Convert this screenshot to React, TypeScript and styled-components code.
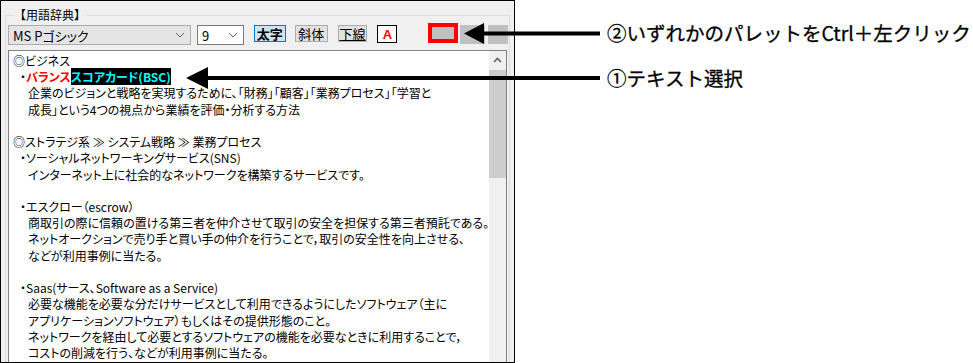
import React from "react";
import styled, { createGlobalStyle } from "styled-components";

const Global = createGlobalStyle`
  html, body { margin: 0; padding: 0; background: #ffffff; }
  body {
    width: 973px;
    height: 363px;
    overflow: hidden;
    font-family: "Noto Sans CJK JP", "Noto Sans", sans-serif;
  }
`;

const Page = styled.div`
  position: relative;
  display: flex;
  width: 973px;
  height: 363px;
`;

const Window = styled.div`
  box-sizing: border-box;
  flex: none;
  width: 515px;
  height: 363px;
  border: 1px solid #000;
  background: #f0f0f0;
  overflow: hidden;
  padding: 14px 4px 0 4px;
`;

const GroupBox = styled.div`
  position: relative;
  border: 1px solid #dcdcdc;
  border-bottom: none;
  padding: 9px 1px 0 1px;
  height: 400px;
`;

const GroupTitle = styled.div`
  position: absolute;
  top: -9px;
  left: 7px;
  padding: 0 1px;
  background: #f0f0f0;
  font-size: 12px;
  line-height: 16px;
  color: #000;
`;

const Toolbar = styled.div`
  display: flex;
  align-items: flex-start;
  height: 20px;
  margin-left: 1px;
  font-feature-settings: "palt";
`;

const Select = styled.div<{ $w: number; $light?: boolean; $ml?: number }>`
  box-sizing: border-box;
  width: ${(p) => p.$w}px;
  height: 20px;
  margin-left: ${(p) => p.$ml ?? 0}px;
  border: 1px solid ${(p) => (p.$light ? "#7a7a7a" : "#adadad")};
  background: ${(p) => (p.$light ? "#ffffff" : "#e5e5e5")};
  display: flex;
  align-items: center;
  justify-content: space-between;
  padding: 0 5px 0 4px;
  font-size: 13px;
  color: #000;
`;

const ToolButton = styled.div<{ $w: number; $ml: number; $active?: boolean; $underline?: boolean }>`
  box-sizing: border-box;
  width: ${(p) => p.$w}px;
  height: 17px;
  margin-left: ${(p) => p.$ml}px;
  border: 1px solid ${(p) => (p.$active ? "#0078d7" : "#adadad")};
  background: ${(p) => (p.$active ? "#cce4f7" : "#e1e1e1")};
  display: flex;
  align-items: center;
  justify-content: center;
  font-size: 13px;
  line-height: 15px;
  font-weight: ${(p) => (p.$active ? 700 : 400)};
  text-decoration: ${(p) => (p.$underline ? "underline" : "none")};
  text-underline-offset: 1px;
  color: #000;
`;

const ColorButton = styled.div`
  box-sizing: border-box;
  width: 20px;
  height: 18px;
  margin-left: 10px;
  border: 1px solid #000;
  background: #fff;
  display: flex;
  align-items: center;
  justify-content: center;
  font-family: "Liberation Sans", Arial, sans-serif;
  font-weight: 700;
  font-size: 13px;
  color: #ff0000;
`;

const Swatch = styled.div<{ $w: number; $ml: number; $selected?: boolean }>`
  box-sizing: border-box;
  width: ${(p) => p.$w}px;
  height: ${(p) => (p.$selected ? 20 : 19)}px;
  margin-left: ${(p) => p.$ml}px;
  margin-top: ${(p) => (p.$selected ? -2 : 0)}px;
  background: #c0c0c0;
  border: ${(p) => (p.$selected ? "4px solid #ff0000" : "none")};
`;

const TextBox = styled.div`
  display: flex;
  margin: 5px 1px 0 1px;
  height: 330px;
  border: 1px solid #828282;
  background: #ffffff;
`;

const TextContent = styled.div`
  flex: 1;
  padding: 2px 0 0 4px;
  font-size: 12px;
  line-height: 16.22px;
  color: #000;
  font-feature-settings: "palt";
  white-space: nowrap;
  overflow: hidden;
`;

const Line = styled.div<{ $indent: number }>`
  height: 16.22px;
  padding-left: ${(p) => [0, 7, 15][p.$indent]}px;
`;

const RedBold = styled.span`
  color: #ff0000;
  font-weight: 700;
`;

const Selected = styled.span`
  background: #000;
  color: #00ffff;
  font-weight: 700;
`;

const ScrollBar = styled.div`
  width: 17px;
  background: #f0f0f0;
  display: flex;
  flex-direction: column;
`;

const ScrollArrow = styled.div`
  height: 17px;
  display: flex;
  align-items: center;
  justify-content: center;
`;

const ScrollThumb = styled.div`
  margin-top: 2px;
  height: 108px;
  background: #cdcdcd;
`;

const Annotations = styled.div`
  display: flex;
  flex-direction: column;
  padding-left: 92px;
  padding-top: 21px;
  gap: 21px;
`;

const Note = styled.div`
  font-size: 19.5px;
  line-height: 24px;
  font-weight: 400;
  color: #000;
  white-space: nowrap;
  -webkit-text-stroke: 0.3px #000;
`;

const Overlay = styled.svg`
  position: absolute;
  left: 0;
  top: 0;
  pointer-events: none;
`;

const Chevron = () => (
  <svg width="10" height="6" viewBox="0 0 10 6">
    <path d="M1 1 L5 5 L9 1" fill="none" stroke="#606060" strokeWidth="1" />
  </svg>
);

const UpChevron = () => (
  <svg width="9" height="6" viewBox="0 0 9 6">
    <path d="M1 5 L4.5 1.5 L8 5" fill="none" stroke="#606060" strokeWidth="1.6" />
  </svg>
);

type L = { i: number; t: React.ReactNode };

const lines: L[] = [
  { i: 0, t: "◎ビジネス" },
  {
    i: 1,
    t: (
      <>
        ・<RedBold>バランス</RedBold>
        <Selected>スコアカード(BSC)</Selected>
      </>
    ),
  },
  { i: 2, t: "企業のビジョンと戦略を実現するために、「財務」「顧客」「業務プロセス」「学習と" },
  { i: 2, t: "成長」という4つの視点から業績を評価・分析する方法" },
  { i: 0, t: "" },
  { i: 0, t: "◎ストラテジ系 ≫ システム戦略 ≫ 業務プロセス" },
  { i: 1, t: "・ソーシャルネットワーキングサービス(SNS)" },
  { i: 2, t: "インターネット上に社会的なネットワークを構築するサービスです。" },
  { i: 0, t: "" },
  { i: 1, t: "・エスクロー（escrow）" },
  { i: 2, t: "商取引の際に信頼の置ける第三者を仲介させて取引の安全を担保する第三者預託である。" },
  { i: 2, t: "ネットオークションで売り手と買い手の仲介を行うことで，取引の安全性を向上させる、" },
  { i: 2, t: "などが利用事例に当たる。" },
  { i: 0, t: "" },
  { i: 1, t: "・Saas(サース、Software as a Service)" },
  { i: 2, t: "必要な機能を必要な分だけサービスとして利用できるようにしたソフトウェア（主に" },
  { i: 2, t: "アプリケーションソフトウェア）もしくはその提供形態のこと。" },
  { i: 2, t: "ネットワークを経由して必要とするソフトウェアの機能を必要なときに利用することで，" },
  { i: 2, t: "コストの削減を行う、などが利用事例に当たる。" },
];

export default function App() {
  return (
    <>
      <Global />
      <Page>
        <Window>
          <GroupBox>
            <GroupTitle>【用語辞典】</GroupTitle>
            <Toolbar>
              <Select $w={184}>
                <span>MS Pゴシック</span>
                <Chevron />
              </Select>
              <Select $w={47} $light $ml={6}>
                <span>9</span>
                <Chevron />
              </Select>
              <ToolButton $w={32} $ml={10} $active>太字</ToolButton>
              <ToolButton $w={33} $ml={9}>斜体</ToolButton>
              <ToolButton $w={30} $ml={10} $underline>下線</ToolButton>
              <ColorButton>A</ColorButton>
              <Swatch $w={30} $ml={31} $selected />
              <Swatch $w={25} $ml={2} />
              <Swatch $w={20} $ml={3} />
            </Toolbar>
            <TextBox>
              <TextContent>
                {lines.map((l, k) => (
                  <Line key={k} $indent={l.i}>
                    {l.t}
                  </Line>
                ))}
              </TextContent>
              <ScrollBar>
                <ScrollArrow>
                  <UpChevron />
                </ScrollArrow>
                <ScrollThumb />
              </ScrollBar>
            </TextBox>
          </GroupBox>
        </Window>
        <Annotations>
          <Note>②いずれかのパレットをCtrl＋左クリック</Note>
          <Note>①テキスト選択</Note>
        </Annotations>
        <Overlay width="973" height="363" viewBox="0 0 973 363">
          <polygon points="464,33.5 484,23 484,44" fill="#000" />
          <rect x="481" y="31.5" width="119" height="4" fill="#000" />
          <polygon points="186,78 208,67 208,89" fill="#000" />
          <rect x="205" y="76" width="395" height="4" fill="#000" />
        </Overlay>
      </Page>
    </>
  );
}
